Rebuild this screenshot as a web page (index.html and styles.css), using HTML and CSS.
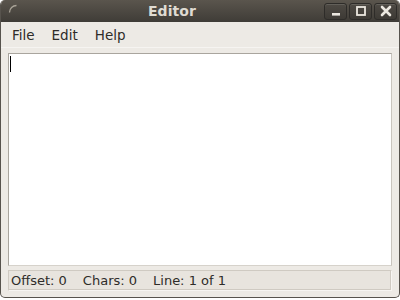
FILE: index.html
```html
<!DOCTYPE html>
<html>
<head>
<meta charset="utf-8">
<link rel="stylesheet" href="styles.css">
</head>
<body>
<div class="window">
  <div class="titlebar">
    <svg class="corner-arc" width="10" height="10" viewBox="0 0 10 10"><path d="M1.5 8.5 A7 7 0 0 1 8.5 1.5" fill="none" stroke="#a8a296" stroke-width="1.3"/></svg>
    <div class="title">Editor</div>
    <div class="buttons">
      <div class="btn"><svg width="12" height="12" viewBox="0 0 12 12"><rect x="2" y="8" width="8" height="2.6" fill="#ebe7df"/></svg></div>
      <div class="btn"><svg width="12" height="12" viewBox="0 0 12 12"><rect x="2" y="2" width="8" height="8" fill="none" stroke="#ebe7df" stroke-width="1.8"/></svg></div>
      <div class="btn"><svg width="12" height="12" viewBox="0 0 12 12"><path d="M2 2 L10 10 M10 2 L2 10" stroke="#ebe7df" stroke-width="2.6" stroke-linecap="round"/></svg></div>
    </div>
  </div>
  <div class="menubar">
    <span class="menu">File</span>
    <span class="menu">Edit</span>
    <span class="menu">Help</span>
  </div>
  <div class="content">
    <div class="textarea"><span class="cursor"></span></div>
    <div class="statusbar">
      <span class="stat">Offset: 0</span>
      <span class="stat">Chars: 0</span>
      <span class="stat">Line: 1 of 1</span>
    </div>
  </div>
</div>
</body>
</html>
```

FILE: styles.css
```css
html, body {
  margin: 0;
  padding: 0;
  background: #ffffff;
  width: 400px;
  height: 300px;
  overflow: hidden;
}
.window {
  width: 400px;
  height: 298px;
  box-sizing: border-box;
  display: flex;
  flex-direction: column;
  background: #edeae5;
  border: 1px solid #57534d;
  border-top: none;
  border-radius: 5px 5px 5px 5px;
  overflow: hidden;
  font-family: "DejaVu Sans", sans-serif;
}
.titlebar {
  height: 22px;
  flex: none;
  position: relative;
  display: flex;
  align-items: center;
  background: linear-gradient(#5a554d, #3f3c37);
  margin: 0 -1px;
}
.corner-arc {
  position: absolute;
  left: 8px;
  top: 4px;
}
.title {
  flex: 1;
  text-align: center;
  padding-left: 20px;
  color: #dfdbd2;
  font-weight: bold;
  font-size: 14px;
  letter-spacing: 0.1px;
}
.buttons {
  display: flex;
  gap: 2px;
  padding-right: 3px;
}
.btn {
  width: 23px;
  height: 17px;
  box-sizing: border-box;
  border: 1px solid #2e2c29;
  border-radius: 3px;
  background: linear-gradient(#4e4a44, #3d3a35);
  box-shadow: inset 0 1px 0 rgba(255,255,255,0.12);
  display: flex;
  align-items: center;
  justify-content: center;
}
.menubar {
  height: 25px;
  flex: none;
  display: flex;
  align-items: center;
  padding-left: 11px;
  border-bottom: 1px solid #f6f4f1;
  background: #edeae5;
}
.menu {
  font-size: 13.5px;
  color: #2e2c29;
  margin-right: 17px;
}
.content {
  flex: 1;
  display: flex;
  flex-direction: column;
  padding: 5px 7px 6px 7px;
  gap: 4px;
}
.textarea {
  flex: 1;
  background: #ffffff;
  border: 1px solid #a9a59e;
  border-right-color: #c9c5be;
  border-bottom-color: #d6d2cb;
  padding: 2px 1px;
}
.cursor {
  display: block;
  width: 1px;
  height: 16px;
  background: #000000;
}
.statusbar {
  height: 21px;
  flex: none;
  box-sizing: border-box;
  border: 1px solid #cfcac2;
  border-right-color: #f7f5f2;
  border-bottom-color: #f7f5f2;
  box-shadow: inset -1px -1px 0 #cfcac2;
  background: #e8e4de;
  display: flex;
  align-items: center;
  padding-left: 2px;
  gap: 16px;
}
.stat {
  font-size: 13px;
  color: #2e2c29;
}
```
